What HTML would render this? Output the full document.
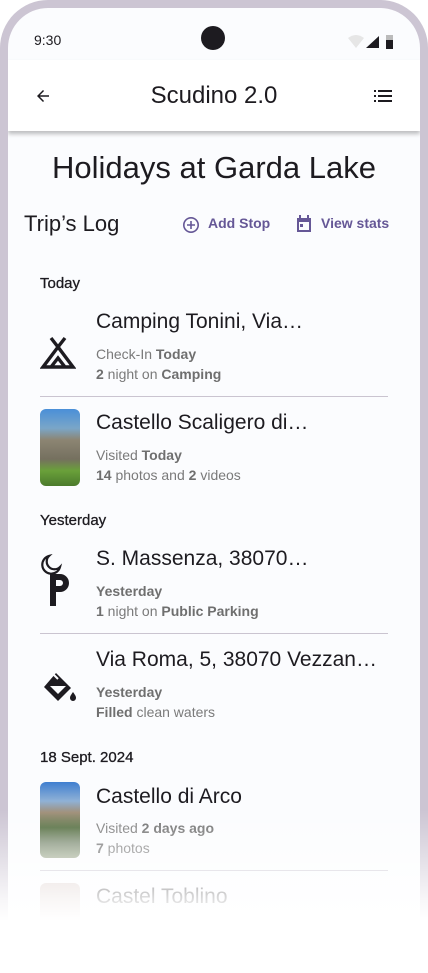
<!DOCTYPE html>
<html style="height:973px;overflow:hidden"><head><meta charset="utf-8"><style>
*{margin:0;padding:0;box-sizing:border-box}
body{width:428px;height:973px;background:#fff;position:relative;overflow:hidden;font-family:"Liberation Sans",sans-serif;color:#1d1b20}
.frame{position:absolute;left:0;top:0;width:428px;height:973px;background:#ccc5d3;border-radius:48px 48px 0 0}
.screen{position:absolute;left:8px;top:8px;width:412px;height:965px;background:#fbfcfe;border-radius:40px 40px 0 0;overflow:hidden}
.abs{position:absolute;white-space:nowrap}
.t{font-size:21px;color:#1d1b20}
.s{font-size:14px;color:#7a7a7a}
.s b{color:#6f6f6f}
.h{font-size:15px;color:#1d1b20;font-weight:normal;-webkit-text-stroke:0.3px #1d1b20}
.div{position:absolute;left:32px;width:348px;height:1px;background:#cac4d0}
.fade{position:absolute;left:0;top:810px;width:428px;height:163px;background:linear-gradient(to bottom,rgba(255,255,255,0),rgba(255,255,255,.85) 55%,#fff 68%)}
</style></head><body>
<div class="frame"></div>
<div class="screen">
 <div class="abs" style="left:26px;top:24px;font-size:14px">9:30</div>
 <div class="abs" style="left:193px;top:18px;width:24px;height:24px;border-radius:50%;background:#1d1b20"></div>
 <svg class="abs" style="left:340px;top:26px" width="52" height="16" viewBox="0 0 52 16"><path d="M0 4 Q8 -2 16 4 L8 14Z" fill="#e6e6e6"/><path d="M18 14 L31 2 V14Z" fill="#1d1b20"/><rect x="38" y="1" width="7" height="14" fill="#1d1b20"/><rect x="38" y="1" width="7" height="5" fill="#bbb"/></svg>
 <div class="abs" style="left:0;top:52px;width:412px;height:71px;background:#fff;box-shadow:0 3px 4px rgba(0,0,0,.25)"></div>
 <svg class="abs" style="left:26px;top:79px" width="18" height="18" viewBox="0 0 24 24"><path d="M20 11H7.8l5.6-5.6L12 4l-8 8 8 8 1.4-1.4L7.8 13H20z" fill="#1d1b20"/></svg>
 <div class="abs" style="left:0;width:412px;text-align:center;top:74px;font-size:24px">Scudino 2.0</div>
 <svg class="abs" style="left:366px;top:79px" width="18" height="18" viewBox="0 0 18 18"><g fill="#1d1b20"><rect x="0" y="3" width="2" height="2"/><rect x="4" y="3" width="14" height="2"/><rect x="0" y="8" width="2" height="2"/><rect x="4" y="8" width="14" height="2"/><rect x="0" y="13" width="2" height="2"/><rect x="4" y="13" width="14" height="2"/></g></svg>
 <div class="abs" style="left:0;width:412px;text-align:center;top:142px;font-size:31px">Holidays at Garda Lake</div>
 <div class="abs" style="left:16px;top:203px;font-size:22px">Trip’s Log</div>
 <svg class="abs" style="left:174px;top:208px" width="18" height="18" viewBox="0 0 18 18"><circle cx="9" cy="9" r="7.2" fill="none" stroke="#655796" stroke-width="1.6"/><path d="M9 5v8M5 9h8" stroke="#655796" stroke-width="1.6"/></svg>
 <div class="abs" style="left:200px;top:207px;font-size:14px;font-weight:bold;color:#655796">Add Stop</div>
 <svg class="abs" style="left:288px;top:207px" width="16" height="18" viewBox="0 0 16 18"><path d="M1 3h14v14H1z" fill="#655796"/><rect x="3" y="7" width="10" height="8" fill="#fbfcfe"/><rect x="3" y="0" width="2" height="4" fill="#655796"/><rect x="11" y="0" width="2" height="4" fill="#655796"/><rect x="4" y="9" width="3" height="3" fill="#655796"/></svg>
 <div class="abs" style="left:313px;top:207px;font-size:14px;font-weight:bold;color:#655796">View stats</div>

 <div class="abs h" style="left:32px;top:267px">Today</div>
 <svg class="abs" style="left:32px;top:327px" width="36" height="36" viewBox="0 0 36 36"><path d="M11 3l7 9 7-9M18 12L3 32h30z M11 32l7-9 7 9" fill="none" stroke="#1d1b20" stroke-width="3.4" stroke-linejoin="miter"/></svg>
 <div class="abs t" style="left:88px;top:302px">Camping Tonini, Via…</div>
 <div class="abs s" style="left:88px;top:338px">Check-In <b>Today</b></div>
 <div class="abs s" style="left:88px;top:358px"><b>2</b> night on <b>Camping</b></div>
 <div class="div" style="top:388px"></div>

 <div class="abs" style="left:32px;top:401px;width:40px;height:77px;border-radius:6px;background:linear-gradient(to bottom,#4a8fd8 0%,#7aa6c8 25%,#8c8573 40%,#75705f 65%,#6aa03a 80%,#4b7a2c 100%)"></div>
 <div class="abs t" style="left:88px;top:403px">Castello Scaligero di…</div>
 <div class="abs s" style="left:88px;top:439px">Visited <b>Today</b></div>
 <div class="abs s" style="left:88px;top:459px"><b>14</b> photos and <b>2</b> videos</div>

 <div class="abs h" style="left:32px;top:504px">Yesterday</div>
 <svg class="abs" style="left:32px;top:546px" width="34" height="52" viewBox="0 0 34 52"><path d="M9 2a9 9 0 1 0 11 11a7 7 0 0 1 -11 -11z" fill="none" stroke="#1d1b20" stroke-width="2.2"/><path d="M10 20h10a9 9 0 0 1 0 18h-4v14h-6z M16 26v6h4a3 3 0 0 0 0-6z" fill="#1d1b20" fill-rule="evenodd"/></svg>
 <div class="abs t" style="left:88px;top:539px">S. Massenza, 38070…</div>
 <div class="abs s" style="left:88px;top:575px"><b>Yesterday</b></div>
 <div class="abs s" style="left:88px;top:595px"><b>1</b> night on <b>Public Parking</b></div>
 <div class="div" style="top:625px"></div>

 <svg class="abs" style="left:34px;top:664px" width="36" height="32" viewBox="0 0 36 32"><path d="M14 1l15 15-13 13L2 15z" fill="#1d1b20"/><path d="M8 14h16l-8 8z" fill="#fbfcfe"/><path d="M12 3l4 4" stroke="#fbfcfe" stroke-width="2"/><path d="M31 20c-2 3-3 4-3 6a3 3 0 0 0 6 0c0-2-1-3-3-6z" fill="#1d1b20"/></svg>
 <div class="abs t" style="left:88px;top:640px">Via Roma, 5, 38070 Vezzan…</div>
 <div class="abs s" style="left:88px;top:676px"><b>Yesterday</b></div>
 <div class="abs s" style="left:88px;top:696px"><b>Filled</b> clean waters</div>

 <div class="abs h" style="left:32px;top:741px">18 Sept. 2024</div>
 <div class="abs" style="left:32px;top:774px;width:40px;height:76px;border-radius:6px;background:linear-gradient(to bottom,#3f7fd0 0%,#8fb1d6 25%,#a0907a 40%,#4f6a3a 60%,#7a8a70 80%,#9aa68a 100%)"></div>
 <div class="abs t" style="left:88px;top:777px">Castello di Arco</div>
 <div class="abs s" style="left:88px;top:812px">Visited <b>2 days ago</b></div>
 <div class="abs s" style="left:88px;top:832px"><b>7</b> photos</div>
 <div class="div" style="top:862px"></div>
 <div class="abs" style="left:32px;top:875px;width:40px;height:60px;border-radius:6px;background:#d8c8c4"></div>
 <div class="abs t" style="left:88px;top:877px">Castel Toblino</div>
</div>
<div class="fade"></div>
</body></html>
